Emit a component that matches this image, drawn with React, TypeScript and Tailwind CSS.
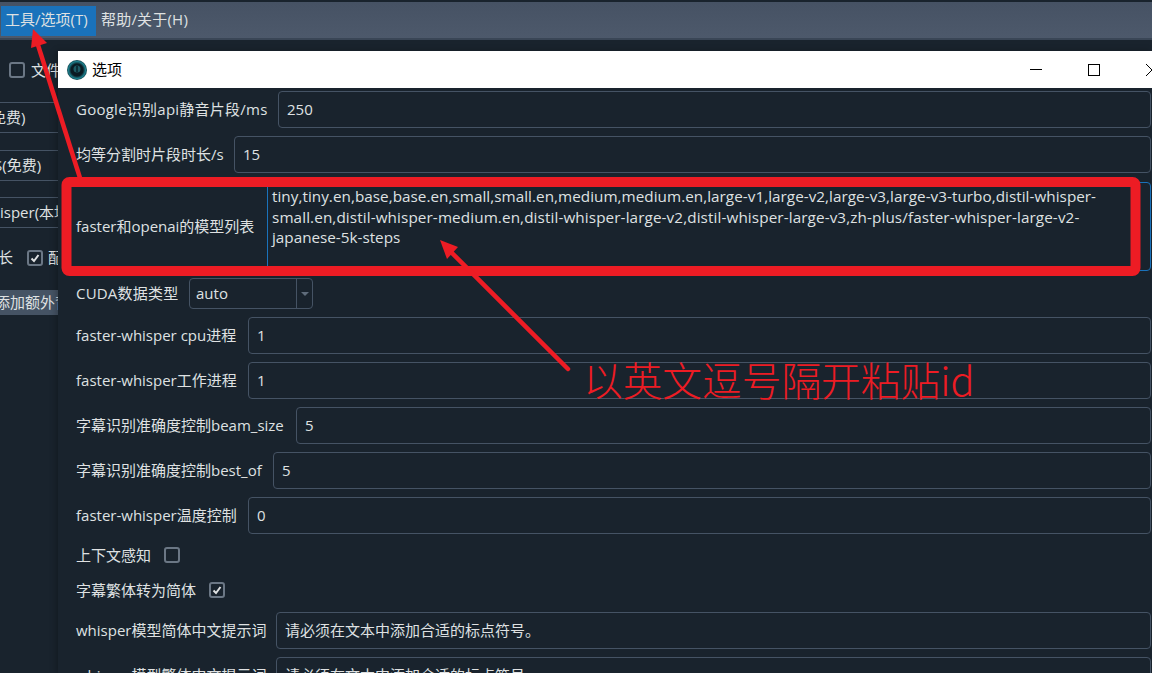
const fontStack = { fontFamily: '"Open Sans", "Noto Sans CJK SC", sans-serif' };

function FieldRow({ label, labelClass, value }: { label: string; labelClass: string; value: string }) {
  return (
    <div className="flex items-center h-[37px] mb-[8px]">
      <span className={`whitespace-nowrap shrink-0 ${labelClass}`}>{label}</span>
      <div className="flex-1 h-full flex items-center px-[8px] border border-[#455364] rounded-[4px] bg-[#19232d]">
        {value}
      </div>
    </div>
  );
}

function CheckBox({ checked }: { checked?: boolean }) {
  return (
    <span className="inline-flex items-center justify-center w-[16px] h-[16px] border-2 border-[#6b7785] rounded-[3px] bg-[#19232d] shrink-0">
      {checked && (
        <svg width="10" height="10" viewBox="0 0 10 10">
          <path d="M1.5 5.5 L4 8 L8.5 2" fill="none" stroke="#dfe1e2" strokeWidth="2" />
        </svg>
      )}
    </span>
  );
}

function LeftPanel() {
  return (
    <div className="w-[58px] overflow-hidden whitespace-nowrap text-[#dfe1e2] text-[15px]">
      <div className="flex items-center gap-[6px] pl-[9px] h-[20px] mt-[20px]">
        <CheckBox />
        <span className="shrink-0">文件</span>
      </div>
      <div className="mt-[22px] h-[31px] border-y border-[#455364] flex items-center">
        <span className="ml-[-9px] shrink-0">免费)</span>
      </div>
      <div className="mt-[17px] h-[31px] border-y border-[#455364] flex items-center">
        <span className="ml-[-6px] shrink-0">S(免费)</span>
      </div>
      <div className="mt-[16px] h-[31px] border-y border-[#455364] flex items-center">
        <span className="shrink-0">isper(本地)</span>
      </div>
      <div className="flex items-center mt-[19px] h-[20px]">
        <span className="ml-[-2px] shrink-0">长</span>
        <span className="ml-[14px] shrink-0">
          <CheckBox checked />
        </span>
        <span className="ml-[5px] shrink-0">配音</span>
      </div>
      <div className="mt-[23px] h-[25px] bg-[#455364] flex items-center">
        <span className="ml-[-5px] shrink-0">添加额外背景</span>
      </div>
    </div>
  );
}

function TitleBar() {
  return (
    <div className="h-[37px] bg-white flex items-center text-black text-[15px]">
      <svg width="20" height="20" viewBox="0 0 20 20" className="ml-[9px]">
        <defs>
          <radialGradient id="ring">
            <stop offset="0.6" stopColor="#0a1a22" />
            <stop offset="0.85" stopColor="#1d7f8c" />
            <stop offset="1" stopColor="#0d3c46" />
          </radialGradient>
        </defs>
        <circle cx="10" cy="10" r="10" fill="url(#ring)" />
        <circle cx="10" cy="9" r="3.5" fill="#1c5a63" />
        <path d="M10 6 V12" stroke="#062028" strokeWidth="1.5" />
      </svg>
      <span className="ml-[5px]">选项</span>
      <div className="ml-auto flex items-center">
        <div className="w-[12px] h-px bg-black mr-[46px]" />
        <div className="w-[12px] h-[12px] border border-black mr-[46px]" />
        <svg width="6" height="12" viewBox="0 0 6 12">
          <path d="M0 0 L6 6 M0 12 L6 6" stroke="#000" fill="none" />
        </svg>
      </div>
    </div>
  );
}

function OptionsDialog() {
  return (
    <div className="absolute left-[58px] top-[51px] w-[1094px] h-[622px] bg-[#19232d] text-[#dfe1e2] text-[15px] overflow-hidden shadow-[-2px_0_6px_rgba(0,0,0,0.25)]">
      <TitleBar />
      <div className="pl-[18px] pr-[1px] pt-[3px]">
        <FieldRow label="Google识别api静音片段/ms" labelClass="w-[202px] tracking-[0.25px]" value="250" />
        <FieldRow label="均等分割时片段时长/s" labelClass="w-[158px]" value="15" />
        <div className="flex items-center h-[89px] mt-[9px] mb-[7px]">
          <span className="whitespace-nowrap w-[191px] shrink-0">faster和openai的模型列表</span>
          <div className="flex-1 h-full border border-[#1a72bb] rounded-[4px] px-[4px] py-[3px] text-[15.25px] leading-[20.5px] whitespace-nowrap">
            <div className="tracking-[0.04px]">tiny,tiny.en,base,base.en,small,small.en,medium,medium.en,large-v1,large-v2,large-v3,large-v3-turbo,distil-whisper-</div>
            <div className="tracking-[0.11px]">small.en,distil-whisper-medium.en,distil-whisper-large-v2,distil-whisper-large-v3,zh-plus/faster-whisper-large-v2-</div>
            <div>japanese-5k-steps</div>
          </div>
        </div>
        <div className="flex items-center h-[31px] mb-[8px]">
          <span className="whitespace-nowrap w-[113px] shrink-0 tracking-[0.2px]">CUDA数据类型</span>
          <div className="w-[124px] h-full flex items-center border border-[#455364] rounded-[4px]">
            <span className="flex-1 px-[6px]">auto</span>
            <div className="w-[16px] h-full border-l border-[#455364] flex items-center justify-center">
              <span className="w-0 h-0 border-x-[4px] border-x-transparent border-t-[4px] border-t-[#5f6c7b]" />
            </div>
          </div>
        </div>
        <FieldRow label="faster-whisper cpu进程" labelClass="w-[172px]" value="1" />
        <FieldRow label="faster-whisper工作进程" labelClass="w-[172px]" value="1" />
        <FieldRow label="字幕识别准确度控制beam_size" labelClass="w-[220px]" value="5" />
        <FieldRow label="字幕识别准确度控制best_of" labelClass="w-[197px]" value="5" />
        <FieldRow label="faster-whisper温度控制" labelClass="w-[172px]" value="0" />
        <div className="flex items-center gap-[13px] h-[20px] mt-[11px] mb-[15px]">
          <span>上下文感知</span>
          <CheckBox />
        </div>
        <div className="flex items-center gap-[13px] h-[20px] mb-[12px]">
          <span>字幕繁体转为简体</span>
          <CheckBox checked />
        </div>
        <FieldRow label="whisper模型简体中文提示词" labelClass="w-[200px]" value="请必须在文本中添加合适的标点符号。" />
        <FieldRow label="whisper模型繁体中文提示词" labelClass="w-[200px]" value="请必须在文本中添加合适的标点符号。" />
      </div>
    </div>
  );
}

function Annotations() {
  return (
    <>
      <svg width="1152" height="673" className="absolute left-0 top-0 pointer-events-none">
        <rect x="66.5" y="182" width="1069" height="89" rx="3" fill="none" stroke="#ed1c24" strokeWidth="10" />
        <path d="M80 178 L38 45" stroke="#ed1c24" strokeWidth="4.5" fill="none" />
        <polygon points="33,29 47,43 31,48" fill="#ed1c24" />
        <path d="M568 369 L449 250" stroke="#ed1c24" strokeWidth="4.5" fill="none" strokeLinecap="round" />
        <polygon points="440,240 458,247 447,259" fill="#ed1c24" />
      </svg>
      <span
        className="absolute left-[583px] top-[350px] text-[39.7px] leading-[58px] text-[#ed1c24] whitespace-nowrap"
        style={{ fontFamily: '"Noto Sans CJK SC", sans-serif', fontWeight: 300 }}
      >
        以英文逗号隔开粘贴id
      </span>
    </>
  );
}

export default function App() {
  return (
    <div className="relative w-[1152px] h-[673px] overflow-hidden bg-[#19232d]" style={fontStack}>
      <div className="h-[2px] bg-[#19232d]" />
      <div className="h-[38px] bg-gradient-to-b from-[#465264] to-[#4d596b] border-b-2 border-[#3a4656] flex items-center text-[#dfe1e2] text-[15px]">
        <div className="ml-[1px] mt-[2px] h-[30px] w-[95px] pl-[4px] pb-[3px] flex items-center bg-[#1a72bb] whitespace-nowrap">工具/选项(T)</div>
        <div className="ml-[5px] pb-[1px] whitespace-nowrap tracking-[0.2px]">帮助/关于(H)</div>
      </div>
      <LeftPanel />
      <OptionsDialog />
      <Annotations />
    </div>
  );
}
